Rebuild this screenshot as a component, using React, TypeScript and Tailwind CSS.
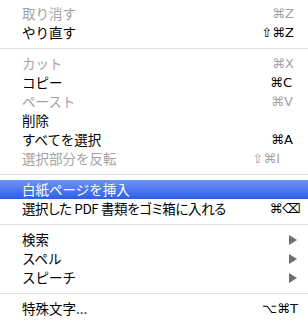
import React from "react";

type Item =
  | { kind: "sep" }
  | {
      kind: "item";
      label: string;
      shortcut?: string;
      disabled?: boolean;
      active?: boolean;
      submenu?: boolean;
      keyPad?: string;
      tight?: boolean;
    };

const items: Item[] = [
  { kind: "item", label: "取り消す", shortcut: "⌘Z", disabled: true, keyPad: "pr-[14px]" },
  { kind: "item", label: "やり直す", shortcut: "⇧⌘Z", keyPad: "pr-[14px]" },
  { kind: "sep" },
  { kind: "item", label: "カット", shortcut: "⌘X", disabled: true, keyPad: "pr-[14px]" },
  { kind: "item", label: "コピー", shortcut: "⌘C", keyPad: "pr-[16px]" },
  { kind: "item", label: "ペースト", shortcut: "⌘V", disabled: true, keyPad: "pr-[15px]" },
  { kind: "item", label: "削除" },
  { kind: "item", label: "すべてを選択", shortcut: "⌘A", keyPad: "pr-[15px]" },
  { kind: "item", label: "選択部分を反転", shortcut: "⇧⌘I", disabled: true, keyPad: "pr-[28px]" },
  { kind: "sep" },
  { kind: "item", label: "白紙ページを挿入", active: true },
  {
    kind: "item",
    label: "選択した PDF 書類をゴミ箱に入れる",
    shortcut: "⌘⌫",
    keyPad: "pr-[7px]",
    tight: true,
  },
  { kind: "sep" },
  { kind: "item", label: "検索", submenu: true },
  { kind: "item", label: "スペル", submenu: true },
  { kind: "item", label: "スピーチ", submenu: true },
  { kind: "sep" },
  { kind: "item", label: "特殊文字...", shortcut: "⌥⌘T", keyPad: "pr-[10px]" },
];

function SubmenuArrow() {
  return (
    <svg width="8" height="10" viewBox="0 0 8 10" className="mr-[11px]">
      <polygon points="0,0 8,5 0,10" fill="#6e6e6e" />
    </svg>
  );
}

export default function App() {
  return (
    <div
      className="w-[308px] h-[322px] bg-white pt-[4px] overflow-hidden"
      style={{ fontFamily: '"Noto Sans CJK JP", "Noto Sans", sans-serif' }}
    >
      {items.map((it, i) => {
        if (it.kind === "sep") {
          return (
            <div key={i} className="h-[12px] flex items-center">
              <div className="h-px w-full bg-[#e0e0e0]" />
            </div>
          );
        }
        const color = it.active
          ? "text-white"
          : it.disabled
            ? "text-[#a3a3a3]"
            : "text-black";
        return (
          <div
            key={i}
            className={`h-[19px] flex items-center justify-between pl-[22px] text-[13.5px] leading-none ${color} ${
              it.active ? "bg-gradient-to-b from-[#6f92f4] to-[#2b5ee9]" : ""
            }`}
          >
            <span
              className={`whitespace-nowrap ${it.tight ? "[font-feature-settings:'palt'] tracking-[-0.4px]" : ""}`}
            >
              {it.label}
            </span>
            {it.shortcut && (
              <span
                className={`whitespace-nowrap text-[13px] ${it.keyPad ?? ""}`}
                style={{ fontFamily: '"DejaVu Sans", "Liberation Sans", sans-serif' }}
              >
                {it.shortcut}
              </span>
            )}
            {it.submenu && <SubmenuArrow />}
          </div>
        );
      })}
    </div>
  );
}
